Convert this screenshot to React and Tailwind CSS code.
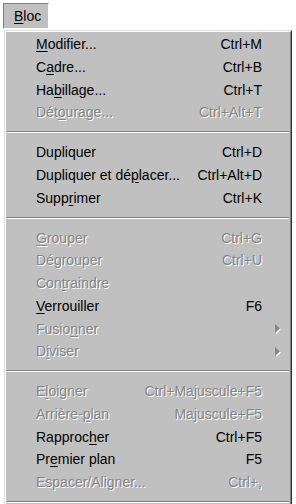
import React from "react";

const SEP = "sep";

const items = [
  { l: ["", "M", "odifier..."], s: "Ctrl+M" },
  { l: ["C", "a", "dre..."], s: "Ctrl+B" },
  { l: ["Ha", "b", "illage..."], s: "Ctrl+T" },
  { l: ["Dét", "o", "urage..."], s: "Ctrl+Alt+T", d: true },
  SEP,
  { l: ["Dupliquer", "", ""], s: "Ctrl+D" },
  { l: ["Dupliquer et dé", "p", "lacer..."], s: "Ctrl+Alt+D" },
  { l: ["Supp", "r", "imer"], s: "Ctrl+K" },
  SEP,
  { l: ["", "G", "rouper"], s: "Ctrl+G", d: true },
  { l: ["Dégrouper", "", ""], s: "Ctrl+U", d: true },
  { l: ["Con", "t", "raindre"], s: "", d: true },
  { l: ["", "V", "errouiller"], s: "F6" },
  { l: ["Fusio", "n", "ner"], s: "", d: true, sub: true },
  { l: ["D", "i", "viser"], s: "", d: true, sub: true },
  SEP,
  { l: ["E", "l", "oigner"], s: "Ctrl+Majuscule+F5", d: true },
  { l: ["Arrière-", "p", "lan"], s: "Majuscule+F5", d: true },
  { l: ["Rapproc", "h", "er"], s: "Ctrl+F5" },
  { l: ["Pr", "e", "mier plan"], s: "F5" },
  { l: ["Espacer/Aligner...", "", ""], s: "Ctrl+,", d: true },
  SEP,
];

function Row({ it }) {
  const cls = it.d
    ? "text-[#858585] [text-shadow:1px_1px_0_#ffffff]"
    : "text-black";
  return (
    <div className={`flex h-[22.7px] items-center ${cls}`}>
      <div className="flex-1 pl-[30px] whitespace-nowrap">
        {it.l[0]}
        {it.l[1] && <span className="underline underline-offset-2">{it.l[1]}</span>}
        {it.l[2]}
      </div>
      <div className="whitespace-nowrap">{it.s}</div>
      <div className="w-[28px] h-full flex items-center pl-[13px]">
        {it.sub && (
          <div className="relative w-[5px] h-[9px]">
            <svg width="5" height="9" viewBox="0 0 5 9" className="absolute left-[1px] top-[1px]">
              <polygon points="0,0 5,4.5 0,9" fill="#ffffff" />
            </svg>
            <svg width="5" height="9" viewBox="0 0 5 9" className="absolute left-0 top-0">
              <polygon points="0,0 5,4.5 0,9" fill="#858585" />
            </svg>
          </div>
        )}
      </div>
    </div>
  );
}

export default function App() {
  return (
    <div className="w-[296px] h-[504px] bg-white overflow-hidden font-['Liberation_Sans',Arial,sans-serif] text-[14px] leading-none">
      <div className="h-[30px] pl-[3px] pt-[3px]">
        <div className="w-[46px] h-[26px] bg-[#c0c0c0] border border-t-[#808080] border-l-[#808080] border-b-white border-r-white flex items-center pl-[10px] text-black">
          <span className="underline underline-offset-2">B</span>loc
        </div>
      </div>
      <div className="ml-[4px] w-[288px] h-[540px] border border-t-[#dfdfdf] border-l-[#dfdfdf] border-r-[#303030] border-b-[#303030]">
        <div className="h-full bg-[#c0c0c0] border border-t-white border-l-white border-r-[#808080] border-b-[#808080] pt-[1px]">
          {items.map((it, i) =>
            it === SEP ? (
              <div key={i} className="h-[17.3px] flex flex-col justify-center px-[1px]">
                <div className="h-px bg-[#808080]" />
                <div className="h-px bg-white" />
              </div>
            ) : (
              <Row key={i} it={it} />
            )
          )}
        </div>
      </div>
    </div>
  );
}
